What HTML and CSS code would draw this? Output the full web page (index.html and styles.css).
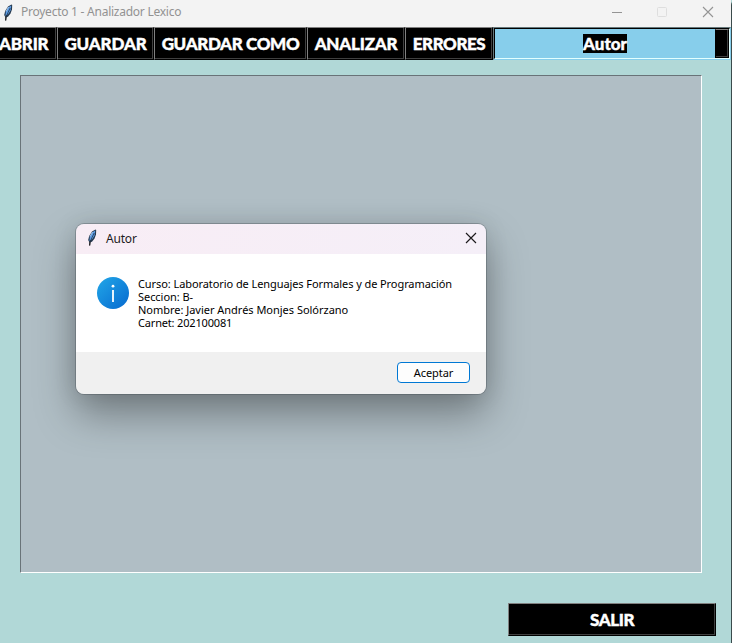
FILE: index.html
```
<!DOCTYPE html>
<html lang="es">
<head>
<meta charset="utf-8">
<title>Proyecto 1 - Analizador Lexico</title>
<link rel="stylesheet" href="styles.css">
</head>
<body>
<svg class="defs" width="0" height="0">
  <symbol id="feather" viewBox="0 0 10 17">
    <path d="M8.5 .5 5 2.5 2.2 7 1.2 11 2.5 13.5 5 12.8 7.5 9.5 9 5.500 9.200 1Z" fill="#25394f"/>
    <path d="M8.300 1.500 5 3.500 2.800 8 2.500 12 5.300 10 7.500 6.500Z" fill="#5b9ce6"/>
    <path d="M5.500 3 3 7.500" fill="none" stroke="#b9d3ef" stroke-width=".8"/>
    <path d="M7.200 4 5 8.500 3 13 2.600 16.500" fill="none" stroke="#1b2735" stroke-width=".7"/>
    <path d="M3 13 2.700 16.500" fill="none" stroke="#111" stroke-width="1.100"/>
  </symbol>
</svg>
<div class="window">
  <header class="titlebar">
    <svg class="feather"><use href="#feather"/></svg>
    <span class="title">Proyecto 1 - Analizador Lexico</span>
    <svg class="controls" width="104" height="12" viewBox="0 0 104 12" fill="none">
      <path d="M0 6.500H10" stroke="#949494"/>
      <rect x="45.500" y="1.500" width="9" height="9" rx="1" stroke="#dedede"/>
      <path d="M91 1 101 11M101 1 91 11" stroke="#949494" stroke-width="1.100"/>
    </svg>
  </header>
  <nav class="toolbar">
    <button class="btn abrir"><span>ABRIR</span></button>
    <button class="btn guardar"><span>GUARDAR</span></button>
    <button class="btn como"><span>GUARDAR COMO</span></button>
    <button class="btn analizar"><span>ANALIZAR</span></button>
    <button class="btn errores"><span>ERRORES</span></button>
    <div class="combo"><div class="inner"><div class="field"><span>Autor</span></div><div class="handle"></div></div></div>
  </nav>
  <main class="panel"></main>
  <footer class="footer"><button class="btn salir"><span>SALIR</span></button></footer>
</div>
<section class="dialog">
  <header class="dialog-title">
    <svg class="feather"><use href="#feather"/></svg>
    <span>Autor</span>
    <svg class="close" width="12" height="12" viewBox="0 0 12 12"><path d="M1 1 11 11M11 1 1 11" stroke="#1c1a1c" stroke-width="1.150"/></svg>
  </header>
  <div class="dialog-body">
    <svg width="32" height="32" viewBox="0 0 32 32">
      <defs><linearGradient id="blue" x1="0" y1="0" x2="1" y2="1"><stop stop-color="#22a7e8"/><stop offset="1" stop-color="#0669cf"/></linearGradient></defs>
      <circle cx="16" cy="16" r="16" fill="url(#blue)"/>
      <circle cx="16" cy="9.200" r="1.400" fill="#fff"/><path d="M16 13V25" stroke="#fff" stroke-width="1.800"/>
    </svg>
    <div class="message">
      <p class="l1">Curso: Laboratorio de Lenguajes Formales y de Programación</p>
      <p class="l2">Seccion: B-</p>
      <p class="l3">Nombre: Javier Andrés Monjes Solórzano</p>
      <p class="l4">Carnet: 202100081</p>
    </div>
  </div>
  <footer class="dialog-footer"><button class="accept">Aceptar</button></footer>
</section>
</body>
</html>
```
FILE: styles.css
```
* { box-sizing: border-box; }
body { margin: 0; width: 732px; height: 643px; overflow: hidden; background: #b1d8d7; font-family: "Noto Sans", sans-serif; }
.defs { position: absolute; }
button { margin: 0; padding: 0; font: inherit; }
.window { display: flex; flex-direction: column; height: 643px; border-right: 1px solid #3b4b4c; border-top-right-radius: 5px; }
.titlebar { display: flex; align-items: center; height: 27px; padding: 0 15px 3px 3px; background: #f3f3f3; color: #929292; font-size: 12px; }
.feather { width: 10px; height: 17px; flex: none; }
.title { position: relative; top: -1px; margin-left: 8px; letter-spacing: -.25px; white-space: nowrap; }
.controls { margin-left: auto; }
.toolbar { display: flex; height: 33px; }
.btn { display: flex; align-items: center; justify-content: center; flex: none; height: 33px; background: #000; border: 1px solid; border-color: #808080 #000 #000 #808080; box-shadow: inset -1px -1px #404040; color: #fff; font: 900 17px/20px Lato, sans-serif; white-space: nowrap; border-radius: 0; -webkit-text-stroke: .4px #fff; }
.abrir { width: 57px; border-left: 0; justify-content: flex-start; letter-spacing: -.2px; }
.abrir span { margin-left: -1px; }
.guardar { width: 97px; letter-spacing: -.15px; }
.como { width: 153px; letter-spacing: -.35px; }
.analizar { width: 98px; letter-spacing: -.2px; }
.errores { width: 88px; letter-spacing: -.45px; }
.salir { width: 208px; letter-spacing: -.4px; }
.combo { width: 238px; height: 33px; border: 1px solid; border-color: #66787b #87ceeb #87ceeb #66787b; }
.inner { display: flex; height: 31px; border: 1px solid; border-color: #000 #e2ffff #e2ffff #000; }
.field { flex: 1; display: flex; align-items: center; justify-content: center; background: #87ceeb; }
.field span { height: 19px; background: #000; color: #fff; font: 900 17px/20px Lato, sans-serif; -webkit-text-stroke: .4px #fff; }
.handle { width: 14px; height: 29px; background: #000; border: 1px solid; border-color: #808080 #000 #000 #000; box-shadow: inset -1px -1px #404040; }
.panel { width: 682px; height: 498px; margin: 15px 0 0 20px; background: #b0bec5; border: 1px solid; border-color: #697378 #fff #fff #697378; }
.footer { display: flex; justify-content: flex-end; margin-top: 30px; padding-right: 15px; }
.dialog { position: absolute; left: 76px; top: 224px; width: 410px; height: 170px; border-radius: 8px; box-shadow: 0 0 0 1px rgba(65,75,80,.35), 0 20px 40px rgba(0,0,0,.35), 0 0 24px rgba(0,0,0,.1); }
.dialog-title { display: flex; align-items: center; height: 30px; padding: 0 9px 1px 11px; border-radius: 8px 8px 0 0; background: linear-gradient(90deg,#f8edf5,#f5eff8); font-size: 12px; color: #1d1b1d; }
.dialog-title .feather { position: relative; top: -1px; }
.dialog-title span { margin: 0 0 0 9px; letter-spacing: -.2px; }
.close { position: relative; top: -1px; margin-left: auto; }
.dialog-body { display: flex; height: 98px; padding: 23px 0 0 21px; background: #fff; }
.message { margin-left: 9px; color: #000; font-size: 11px; line-height: 13px; white-space: nowrap; }
.message p { margin: 0; width: max-content; }
.l1 { letter-spacing: -.08px; }
.l2 { letter-spacing: -.05px; }
.l3 { letter-spacing: -.02px; }
.l4 { letter-spacing: -.17px; }
.dialog-footer { display: flex; justify-content: flex-end; height: 42px; padding: 10px 16px 0 0; background: #f0f0f0; border-radius: 0 0 8px 8px; }
.accept { width: 73px; height: 21px; border: 1px solid #0078d4; border-radius: 4px; background: #fdfdfd; color: #000; font-size: 11px; line-height: 18px; letter-spacing: -.05px; }
```
